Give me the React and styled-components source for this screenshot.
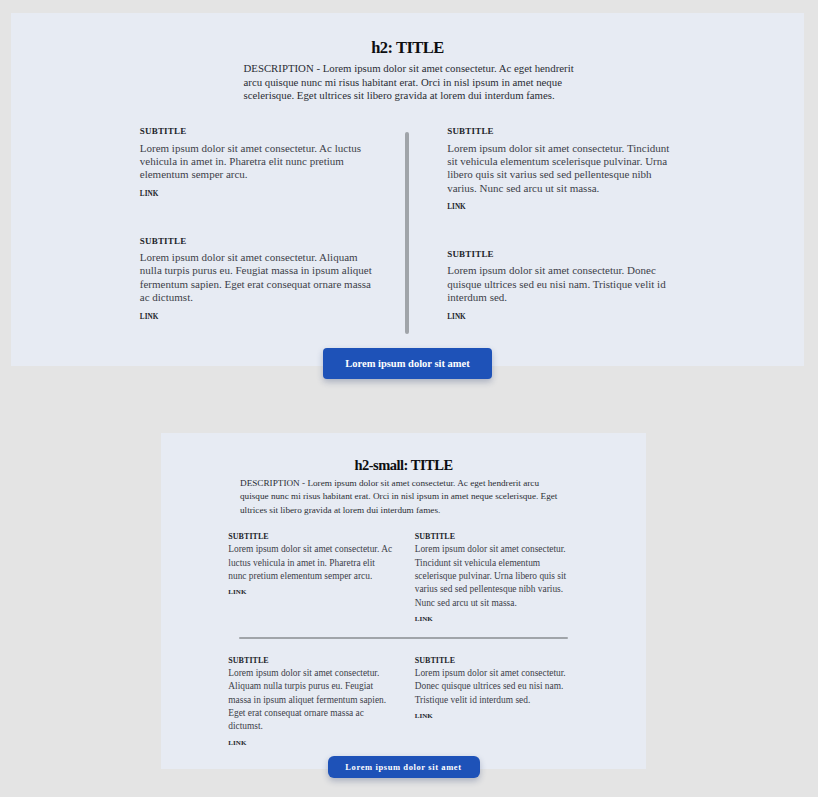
import React from "react";
import styled, { createGlobalStyle } from "styled-components";

const Global = createGlobalStyle`
  html, body { margin: 0; padding: 0; background: #e4e4e4; }
  body { font-family: "Liberation Serif", "DejaVu Serif", serif; }
`;

const Page = styled.div`
  display: flex;
  flex-direction: column;
  padding: 13.3px 14px 20px 11px;
`;

const Section = styled.section`
  display: flex;
  flex-direction: column;
  align-items: center;
  align-self: ${(p) => (p.$small ? "flex-start" : "stretch")};
  margin-left: ${(p) => (p.$small ? "150px" : "0")};
  margin-top: ${(p) => (p.$small ? "54.3px" : "0")};
  width: ${(p) => (p.$small ? "485px" : "auto")};
`;

const Card = styled.div`
  align-self: stretch;
  background: #e7ebf3;
  display: flex;
  flex-direction: column;
  align-items: center;
  padding: ${(p) => (p.$small ? "22.7px 0 20px" : "25px 0 32px")};
`;

const Title = styled.h2`
  margin: 0;
  font-family: "Liberation Serif", serif;
  font-weight: 700;
  font-size: ${(p) => (p.$small ? "14.5px" : "16.5px")};
  letter-spacing: -0.5px;
  line-height: ${(p) => (p.$small ? "18px" : "20px")};
  color: #0d0e10;
`;

const Description = styled.p`
  margin: ${(p) => (p.$small ? "3.3px 0 0 1px" : "4px 0 0 8px")};
  width: ${(p) => (p.$small ? "328px" : "336px")};
  font-size: ${(p) => (p.$small ? "9.2px" : "10.8px")};
  line-height: 13.33px;
  color: #2a2d33;
`;

const Columns = styled.div`
  display: flex;
  align-items: stretch;
  margin-top: 21.7px;
`;

const Column = styled.div`
  display: flex;
  flex-direction: column;
  gap: 33.7px;
  width: ${(p) => p.$w}px;
  padding-bottom: 11px;
`;

const VDivider = styled.div`
  width: 4px;
  border-radius: 2px;
  background: #a0a4a9;
  margin: 8px 38px 0 27.4px;
  align-self: stretch;
`;

const Grid = styled.div`
  display: grid;
  grid-template-columns: 167px 158px;
  column-gap: 19.4px;
  margin-top: 13.2px;
  margin-right: 6px;
`;

const HDivider = styled.div`
  grid-column: 1 / -1;
  height: 2px;
  border-radius: 1px;
  background: #a0a4a9;
  margin: 12.3px 5px 14.9px 10.7px;
`;

const Item = styled.div`
  display: flex;
  flex-direction: column;
`;

const Subtitle = styled.h3`
  margin: 0;
  font-size: ${(p) => (p.$small ? "8px" : "9px")};
  line-height: ${(p) => (p.$small ? "13px" : "14px")};
  font-weight: 700;
  letter-spacing: ${(p) => (p.$small ? "0.05px" : "0.2px")};
  color: #22252b;
`;

const Body = styled.p`
  margin: ${(p) => (p.$small ? "0" : "3.6px 0 0")};
  font-size: ${(p) => (p.$small ? "9.4px" : "11px")};
  line-height: 13.33px;
  color: #3d4149;
`;

const Link = styled.a`
  margin-top: ${(p) => (p.$small ? "3px" : "6.3px")};
  font-size: ${(p) => (p.$small ? "7px" : "7.2px")};
  line-height: 12px;
  font-weight: 700;
  letter-spacing: 0.05px;
  color: #22252b;
  text-decoration: none;
`;

const Button = styled.button`
  position: relative;
  margin-top: ${(p) => (p.$small ? "-13px" : "-18px")};
  width: ${(p) => (p.$small ? "152px" : "169px")};
  height: ${(p) => (p.$small ? "22px" : "31px")};
  padding: 0;
  border: none;
  border-radius: ${(p) => (p.$small ? "6px" : "4px")};
  background: #1e52b8;
  color: #fff;
  font-family: "Liberation Serif", serif;
  font-weight: 700;
  font-size: ${(p) => (p.$small ? "8.5px" : "10.5px")};
  letter-spacing: ${(p) => (p.$small ? "0.6px" : "0")};
  box-shadow: 0 3px 6px rgba(40, 60, 110, 0.3);
  cursor: pointer;
`;

const DESC =
  "DESCRIPTION - Lorem ipsum dolor sit amet consectetur. Ac eget hendrerit arcu quisque nunc mi risus habitant erat. Orci in nisl ipsum in amet neque scelerisque. Eget ultrices sit libero gravida at lorem dui interdum fames.";

const T1 = "Lorem ipsum dolor sit amet consectetur. Ac luctus vehicula in amet in. Pharetra elit nunc pretium elementum semper arcu.";
const T2 = "Lorem ipsum dolor sit amet consectetur. Tincidunt sit vehicula elementum scelerisque pulvinar. Urna libero quis sit varius sed sed pellentesque nibh varius. Nunc sed arcu ut sit massa.";
const T3 = "Lorem ipsum dolor sit amet consectetur. Aliquam nulla turpis purus eu. Feugiat massa in ipsum aliquet fermentum sapien. Eget erat consequat ornare massa ac dictumst.";
const T4 = "Lorem ipsum dolor sit amet consectetur. Donec quisque ultrices sed eu nisi nam. Tristique velit id interdum sed.";

function Feature({ text, small }) {
  return (
    <Item>
      <Subtitle $small={small}>SUBTITLE</Subtitle>
      <Body $small={small}>{text}</Body>
      <Link $small={small} href="#">LINK</Link>
    </Item>
  );
}

export default function App() {
  return (
    <>
      <Global />
      <Page>
        <Section>
          <Card>
            <Title>h2: TITLE</Title>
            <Description>{DESC}</Description>
            <Columns>
              <Column $w={238}>
                <Feature text={T1} />
                <Feature text={T3} />
              </Column>
              <VDivider />
              <Column $w={228}>
                <Feature text={T2} />
                <Feature text={T4} />
              </Column>
            </Columns>
          </Card>
          <Button>Lorem ipsum dolor sit amet</Button>
        </Section>

        <Section $small>
          <Card $small>
            <Title $small>h2-small: TITLE</Title>
            <Description $small>{DESC}</Description>
            <Grid>
              <Feature small text={T1} />
              <Feature small text={T2} />
              <HDivider />
              <Feature small text={T3} />
              <Feature small text={T4} />
            </Grid>
          </Card>
          <Button $small>Lorem ipsum dolor sit amet</Button>
        </Section>
      </Page>
    </>
  );
}
